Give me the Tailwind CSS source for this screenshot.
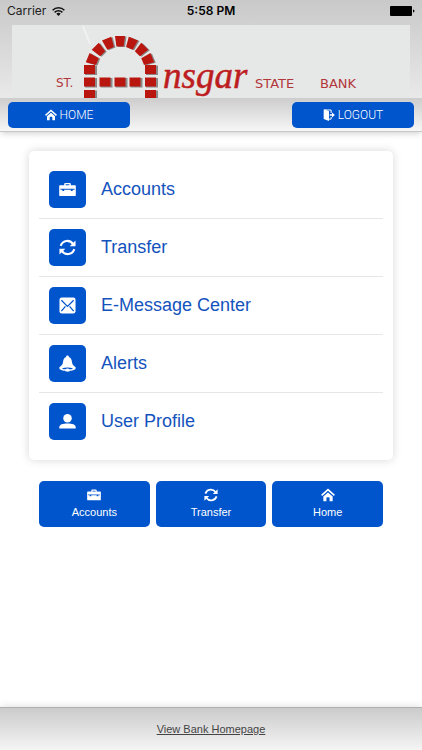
<!DOCTYPE html>
<html lang="en">
<head>
    <meta charset="UTF-8">
    <meta name="viewport" content="width=device-width, initial-scale=1.0">
    <title>St. Ansgar State Bank</title>
    <script src="https://cdn.jsdelivr.net/npm/@tailwindcss/browser@4"></script>
</head>
<body class="flex min-h-screen flex-col bg-white font-['Liberation_Sans',Arial,sans-serif]">
    <!-- Shared icons -->
    <svg class="hidden" aria-hidden="true">
        <symbol id="icon-briefcase" viewBox="0 0 18 18">
            <path fill="currentColor" fill-rule="evenodd" d="M5.500 4.500V3.200Q5.500 2 6.800 2h4.400Q12.500 2 12.500 3.200V4.500H17q.8 0 .8.800V15q0 .8-.8.800H1q-.8 0-.8-.8V5.300q0-.8.8-.8ZM7 4.500h4V3.400H7ZM1.500 8.300v1h2v1.400h2V9.300h7v1.400h2V9.300h2v-1Z"/>
        </symbol>
        <symbol id="icon-refresh" viewBox="0 0 18 18">
            <path fill="none" stroke="currentColor" stroke-width="2.200" d="M1.800 7.200C4 .8 11.500.6 14.800 5.200M16.200 10.800C14 17.200 6.500 17.400 3.200 12.800"/>
            <path fill="currentColor" d="M17.500 1.500v6.200h-6.200ZM.5 16.500v-6.200h6.200Z"/>
        </symbol>
        <symbol id="icon-mail" viewBox="0 0 18 18">
            <rect width="17" height="17" x=".5" y=".5" rx="2.500" fill="currentColor"/>
            <path fill="none" stroke="#0054cc" stroke-width="1.300" d="M2.500 3.500 9 10l6.500-6.500M2.500 15l4.300-5M15.500 15l-4.300-5"/>
        </symbol>
        <symbol id="icon-bell" viewBox="0 0 18 18">
            <path fill="currentColor" fill-rule="evenodd" d="M9 .5c1 0 1.500.6 1.500 1.500 2.200.8 3 2.800 3.200 5.200.3 3 1.300 4 3.300 5.300 1 .7 1 2.200-.2 2.900-1.600.9-3.500 1.300-5.400 1.400-.3 1.300-4.500 1.300-4.800 0-1.900-.1-3.800-.5-5.400-1.400-1.200-.7-1.200-2.200-.2-2.900 2-1.300 3-2.300 3.300-5.300.2-2.400 1-4.400 3.200-5.200C7.500 1.100 8 .5 9 .5ZM3 14.200c1.200.7 2.500.9 4 1 .6-1.300 3.400-1.300 4 0 1.500-.1 2.800-.3 4-1-3.500-1.300-8.500-1.300-12 0Z"/>
        </symbol>
        <symbol id="icon-user" viewBox="0 0 18 18">
            <circle cx="9" cy="5.500" r="4.500" fill="currentColor"/>
            <path fill="currentColor" d="M.3 16.500v-1.800C.5 12.200 4 11 9 11s8.500 1.200 8.700 3.700v1.800Z"/>
        </symbol>
        <symbol id="icon-home" viewBox="0 0 18 18">
            <path fill="none" stroke="currentColor" stroke-width="2.200" d="M.8 9.500 9 2.200l8.200 7.300"/>
            <path fill="currentColor" d="M9 5.800 15 11v6H11v-4.200Q11 11.800 10 11.800H8Q7 11.800 7 12.800V17H3V11Z"/>
        </symbol>
        <symbol id="icon-logout" viewBox="0 0 18 18">
            <path fill="currentColor" d="M1 .8h2l6 2.700V18l-8-3Z"/>
            <path fill="none" stroke="currentColor" stroke-width="1.500" d="M2 1.500h10.200V6M12.200 12v3.200H8"/>
            <path fill="currentColor" d="M10 7.800h3.500V5.200L17.800 9l-4.300 3.800v-2.600H10Z"/>
        </symbol>
    </svg>

    <header class="bg-linear-to-b from-[#c9c9c9] to-[#e9e9e9] px-3">
        <!-- Status bar -->
        <div class="-mx-3 grid h-[25px] grid-cols-3 items-start px-[7px] pt-[3px] font-['Inter',sans-serif] text-[12px] leading-4 text-[#222]">
            <div class="flex items-center gap-[6px]">
                <span>Carrier</span>
                <svg class="h-[9px] w-[13px]" viewBox="0 0 13 9" fill="none" stroke="#111" stroke-width="1.500" aria-hidden="true">
                    <path d="M.6 3.200a8.500 8.500 0 0 1 11.800 0M2.600 5.400a5.600 5.600 0 0 1 7.800 0"/>
                    <path fill="#111" stroke="none" d="M4.300 6.800a3.200 3.200 0 0 1 4.400 0L6.500 9Z"/>
                </svg>
            </div>
            <span class="text-center font-semibold text-black">5:58 PM</span>
            <svg class="mt-[3px] h-[10px] w-[25px] justify-self-end" viewBox="0 0 25 10" aria-hidden="true">
                <rect width="22" height="10" rx="1"/>
                <path d="M23 3.500q1.500.3 1.500 1.500T23 6.500Z"/>
            </svg>
        </div>
        <!-- Bank logo -->
        <svg class="block w-full bg-[#e6e8e7]" viewBox="0 0 398 73" role="img" aria-label="St. Ansgar State Bank">
            <defs>
                <path id="arch-block" d="M-5-35H5L3.600-24.500h-7.200Z"/>
                <g id="arch">
                    <use href="#arch-block"/>
                    <use href="#arch-block" transform="rotate(-22.500)"/>
                    <use href="#arch-block" transform="rotate(-45)"/>
                    <use href="#arch-block" transform="rotate(-67.500)"/>
                    <use href="#arch-block" transform="rotate(22.500)"/>
                    <use href="#arch-block" transform="rotate(45)"/>
                    <use href="#arch-block" transform="rotate(67.500)"/>
                </g>
                <g id="brick">
                    <path fill="#8d8888" d="M1 .5h12V10H1Z"/>
                    <path fill="#b91610" d="M0 0h11v9H0Z"/>
                </g>
            </defs>
            <path stroke="#f0f2f1" stroke-width="2" d="m71 1 7 18"/>
            <use href="#arch" x="109.500" y="46.500" fill="#8d8888"/>
            <use href="#arch" x="108" y="46" fill="#b91610"/>
            <use href="#brick" x="72" y="40"/>
            <use href="#brick" x="133" y="40"/>
            <use href="#brick" x="72" y="52.500"/>
            <use href="#brick" x="87.500" y="52.500"/>
            <use href="#brick" x="102.500" y="52.500"/>
            <use href="#brick" x="117.500" y="52.500"/>
            <use href="#brick" x="133" y="52.500"/>
            <use href="#brick" x="72" y="65"/>
            <use href="#brick" x="133" y="65"/>
            <g fill="#b3363b" font-family="DejaVu Sans, sans-serif" font-size="13">
                <text x="44" y="62" font-size="12">ST.</text>
                <text x="243" y="63">STATE</text>
                <text x="308" y="63">BANK</text>
            </g>
            <text x="151" y="63" fill="#bd1d20" stroke="#bd1d20" stroke-width=".5" font-family="Liberation Serif, serif" font-size="37" font-style="italic">nsgar</text>
        </svg>
    </header>

    <nav class="flex justify-between border-b border-[#c8c8c8] bg-linear-to-b from-[#cdcdcd] to-[#f6f6f6] px-2 pt-1 pb-[3px] shadow-md">
        <button type="button" class="flex h-[26px] w-[122px] items-center justify-center gap-[3px] rounded-[5px] bg-[#0054cc] font-['Roboto',sans-serif] text-[12px] font-light text-white">
            <svg class="size-3" aria-hidden="true"><use href="#icon-home"/></svg>HOME
        </button>
        <button type="button" class="flex h-[26px] w-[122px] items-center justify-center gap-[3px] rounded-[5px] bg-[#0054cc] font-['Roboto',sans-serif] text-[12px] font-light text-white">
            <svg class="size-3" aria-hidden="true"><use href="#icon-logout"/></svg>LOGOUT
        </button>
    </nav>

    <main class="flex-1 px-[29px] pt-[19px]">
        <ul class="divide-y divide-[#e6e6e6] rounded-[5px] bg-white p-[10px] text-[18px] text-[#1453bd] shadow-[0_0_10px_rgba(0,0,0,0.16)]">
            <li>
                <a href="#" class="flex h-[57px] items-center gap-[15px] px-[10px]">
                    <span class="grid size-[37px] place-items-center rounded-[5px] bg-[#0054cc] text-white"><svg class="size-[17px]" aria-hidden="true"><use href="#icon-briefcase"/></svg></span>
                    Accounts
                </a>
            </li>
            <li>
                <a href="#" class="flex h-[57px] items-center gap-[15px] px-[10px]">
                    <span class="grid size-[37px] place-items-center rounded-[5px] bg-[#0054cc] text-white"><svg class="size-[17px]" aria-hidden="true"><use href="#icon-refresh"/></svg></span>
                    Transfer
                </a>
            </li>
            <li>
                <a href="#" class="flex h-[57px] items-center gap-[15px] px-[10px]">
                    <span class="grid size-[37px] place-items-center rounded-[5px] bg-[#0054cc] text-white"><svg class="size-[17px]" aria-hidden="true"><use href="#icon-mail"/></svg></span>
                    E-Message Center
                </a>
            </li>
            <li>
                <a href="#" class="flex h-[57px] items-center gap-[15px] px-[10px]">
                    <span class="grid size-[37px] place-items-center rounded-[5px] bg-[#0054cc] text-white"><svg class="size-[17px]" aria-hidden="true"><use href="#icon-bell"/></svg></span>
                    Alerts
                </a>
            </li>
            <li>
                <a href="#" class="flex h-[57px] items-center gap-[15px] px-[10px]">
                    <span class="grid size-[37px] place-items-center rounded-[5px] bg-[#0054cc] text-white"><svg class="size-[17px]" aria-hidden="true"><use href="#icon-user"/></svg></span>
                    User Profile
                </a>
            </li>
        </ul>

        <div class="mt-[21px] grid grid-cols-3 gap-[6px] px-[10px] text-[11px] leading-4 text-white">
            <button type="button" class="flex h-[46px] flex-col items-center justify-center gap-[2px] rounded-[5px] bg-[#0054cc]">
                <svg class="size-[14px]" aria-hidden="true"><use href="#icon-briefcase"/></svg>
                Accounts
            </button>
            <button type="button" class="flex h-[46px] flex-col items-center justify-center gap-[2px] rounded-[5px] bg-[#0054cc]">
                <svg class="size-[14px]" aria-hidden="true"><use href="#icon-refresh"/></svg>
                Transfer
            </button>
            <button type="button" class="flex h-[46px] flex-col items-center justify-center gap-[2px] rounded-[5px] bg-[#0054cc]">
                <svg class="size-[14px]" aria-hidden="true"><use href="#icon-home"/></svg>
                Home
            </button>
        </div>
    </main>

    <footer class="flex h-[43px] items-center justify-center border-t border-[#b0b0b0] bg-linear-to-b from-[#cbcbcb] to-[#f5f5f5] shadow-[0_0_8px_rgba(0,0,0,0.15)]">
        <a href="#" class="text-[11px] text-[#444] underline">View Bank Homepage</a>
    </footer>
</body>
</html>
